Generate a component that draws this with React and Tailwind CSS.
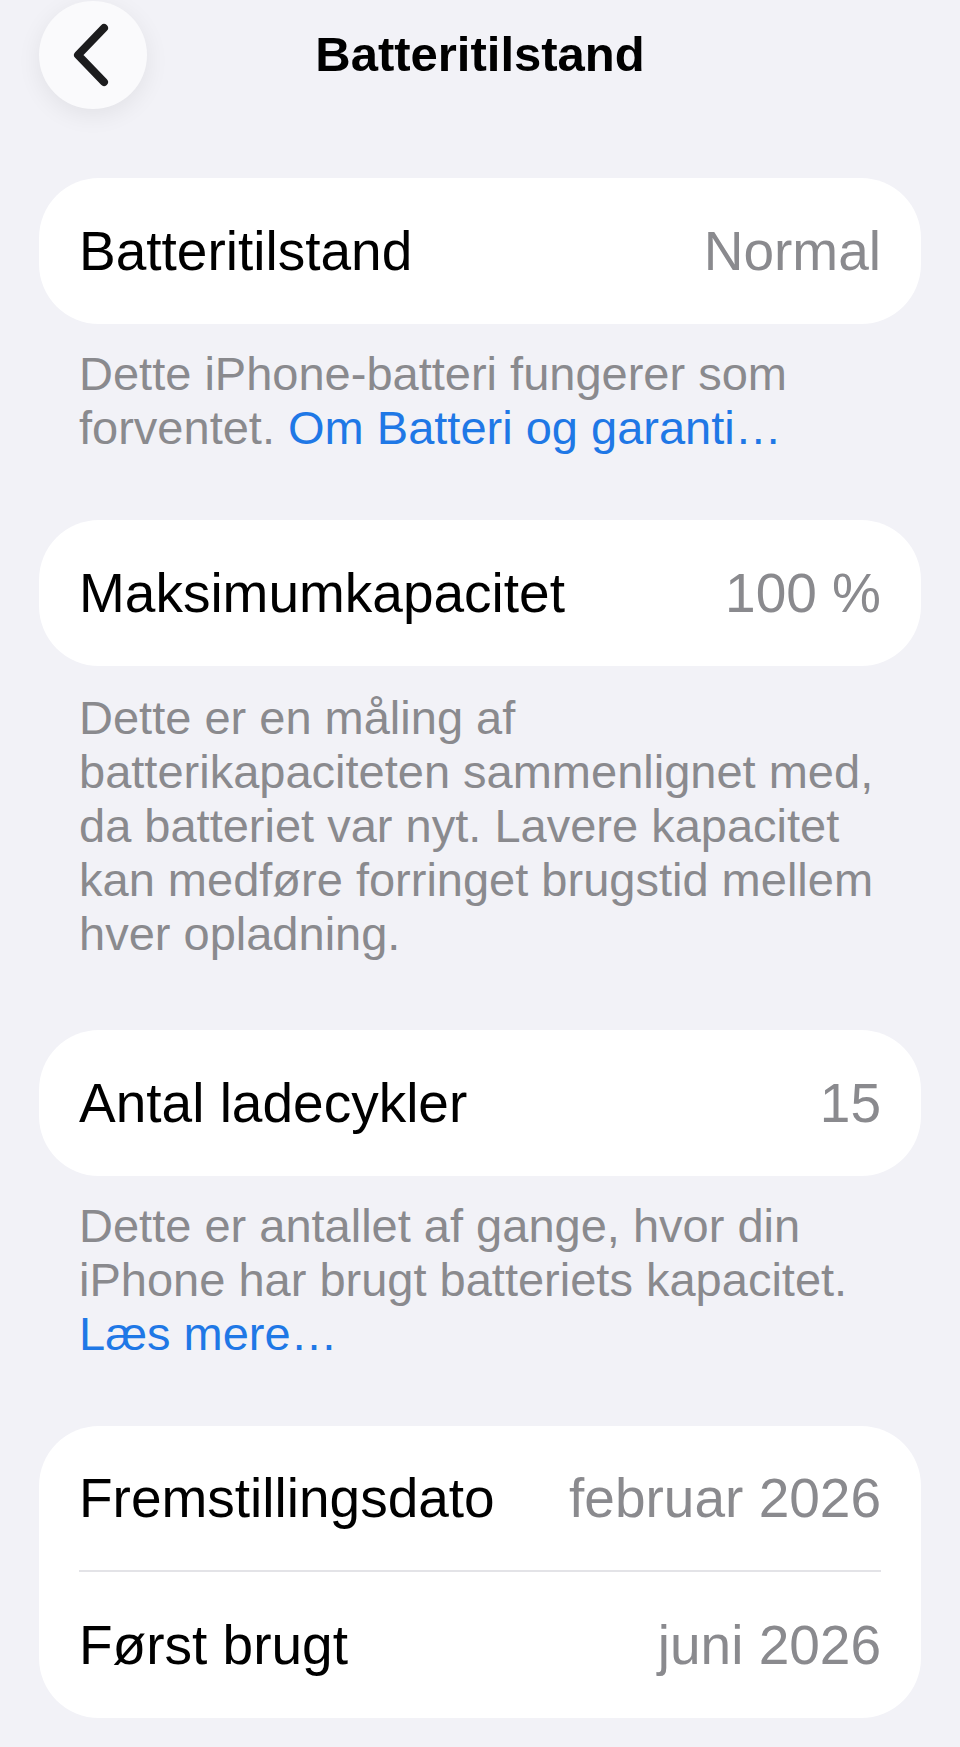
import React from 'react';

function Row({ label, value, divider }) {
  return (
    <div className="px-[40px]">
      <div className={`flex h-[146px] items-center justify-between ${divider ? 'border-b-2 border-[#e3e3e7]' : ''}`}>
        <span className="text-[55px] leading-none text-black">{label}</span>
        <span className="text-[55px] leading-none text-[#8a8a8e]">{value}</span>
      </div>
    </div>
  );
}

function Card({ children }) {
  return <div className="mx-[39px] overflow-hidden rounded-[60px] bg-white">{children}</div>;
}

function Note({ lines, link, linkOwnLine }) {
  return (
    <div className="px-[79px] text-[47px] leading-[54px] text-[#8a8a8e]">
      {lines.map((l, i) => (
        <div key={i} className="whitespace-nowrap">
          {l}
          {i === lines.length - 1 && link && !linkOwnLine ? (
            <span className="text-[#1f78e6]"> {link}</span>
          ) : null}
        </div>
      ))}
      {link && linkOwnLine ? <div className="text-[#1f78e6]">{link}</div> : null}
    </div>
  );
}

export default function App() {
  return (
    <div className="min-h-[1747px] w-[960px] bg-[#f2f2f7] font-['Liberation_Sans',Arial,sans-serif] pb-[29px]">
      <div className="grid h-[109px] grid-cols-[1fr_auto_1fr] items-center px-[39px]">
        <div>
          <button className="flex h-[108px] w-[108px] items-center justify-center rounded-full bg-[#fafafc] shadow-[0_6px_24px_rgba(0,0,0,0.07)]">
            <svg width="40" height="64" viewBox="0 0 40 64" className="-ml-[2px]">
              <path d="M32 5 L6 32 L32 59" fill="none" stroke="#1c1c1e" strokeWidth="8" strokeLinecap="round" strokeLinejoin="round" />
            </svg>
          </button>
        </div>
        <h1 className="text-[49px] font-bold leading-none text-black">Batteritilstand</h1>
        <div />
      </div>

      <div className="mt-[69px] flex flex-col">
        <Card>
          <Row label="Batteritilstand" value="Normal" />
        </Card>
        <div className="mt-[23px]">
          <Note lines={['Dette iPhone-batteri fungerer som', 'forventet.']} link="Om Batteri og garanti…" />
        </div>

        <div className="mt-[65px]">
          <Card>
            <Row label="Maksimumkapacitet" value="100 %" />
          </Card>
        </div>
        <div className="mt-[25px]">
          <Note
            lines={[
              'Dette er en måling af',
              'batterikapaciteten sammenlignet med,',
              'da batteriet var nyt. Lavere kapacitet',
              'kan medføre forringet brugstid mellem',
              'hver opladning.',
            ]}
          />
        </div>

        <div className="mt-[69px]">
          <Card>
            <Row label="Antal ladecykler" value="15" />
          </Card>
        </div>
        <div className="mt-[23px]">
          <Note
            lines={['Dette er antallet af gange, hvor din', 'iPhone har brugt batteriets kapacitet.']}
            link="Læs mere…"
            linkOwnLine
          />
        </div>

        <div className="mt-[65px]">
          <Card>
            <Row label="Fremstillingsdato" value="februar 2026" divider />
            <Row label="Først brugt" value="juni 2026" />
          </Card>
        </div>
      </div>
    </div>
  );
}
